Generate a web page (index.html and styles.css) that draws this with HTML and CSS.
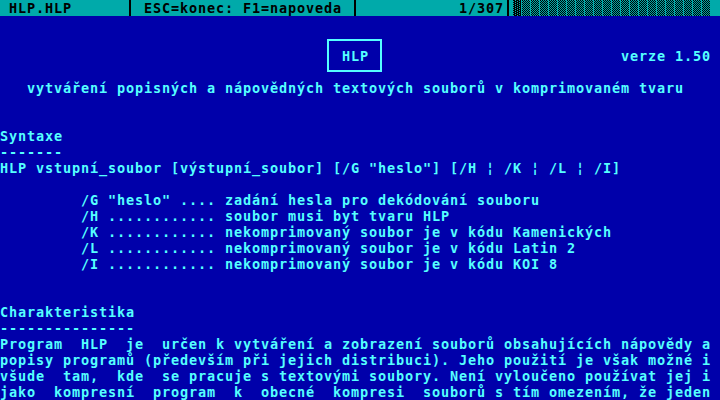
FILE: index.html
```html
<!DOCTYPE html>
<html lang="cs">
<head>
<meta charset="utf-8">
<title>HLP.HLP</title>
<link rel="stylesheet" href="styles.css">
</head>
<body>
<div class="screen">
  <div class="status">
    <span class="seg"> HLP.HLP      </span><span class="vb"></span><span class="seg"> ESC=konec: F1=napoveda </span><span class="vb"></span><span class="seg">           1/307</span><span class="vb"></span><svg class="scroll" width="198" height="16" viewBox="0 0 198 16" shape-rendering="crispEdges">
      <defs>
        <pattern id="med" width="9" height="2" patternUnits="userSpaceOnUse">
          <path d="M0 0h1v1H0zM2 0h1v1H2zM4 0h1v1H4zM6 0h1v1H6zM1 1h1v1H1zM3 1h1v1H3zM5 1h1v1H5zM7 1h1v1H7z" fill="#000"/>
        </pattern>
        <pattern id="dark" width="9" height="2" patternUnits="userSpaceOnUse">
          <rect x="0" y="0" width="8" height="2" fill="#000"/>
          <path d="M2 0h1v1H2zM6 0h1v1H6zM0 1h1v1H0zM4 1h1v1H4z" fill="#00aaaa"/>
        </pattern>
      </defs>
      <rect x="0" y="0" width="9" height="16" fill="url(#dark)"/>
      <rect x="9" y="0" width="189" height="16" fill="url(#med)"/>
    </svg><span class="seg"> </span>
  </div>
  <div class="main">
    <div class="ln"> </div>
    <div class="title">
      <div class="box">HLP</div>
      <div class="verze">verze 1.50</div>
    </div>
    <div class="ln">   vytváření popisných a nápovědných textových souborů v komprimovaném tvaru</div>
    <div class="ln"> </div>
    <div class="ln"> </div>
    <div class="ln">Syntaxe</div>
    <div class="ln">-------</div>
    <div class="ln">HLP vstupní_soubor [výstupní_soubor] [/G "heslo"] [/H ¦ /K ¦ /L ¦ /I]</div>
    <div class="ln"> </div>
    <div class="ln">         /G "heslo" .... zadání hesla pro dekódování souboru</div>
    <div class="ln">         /H ............ soubor musi byt tvaru HLP</div>
    <div class="ln">         /K ............ nekomprimovaný soubor je v kódu Kamenických</div>
    <div class="ln">         /L ............ nekomprimovaný soubor je v kódu Latin 2</div>
    <div class="ln">         /I ............ nekomprimovaný soubor je v kódu KOI 8</div>
    <div class="ln"> </div>
    <div class="ln"> </div>
    <div class="ln">Charakteristika</div>
    <div class="ln">---------------</div>
    <div class="ln">Program  HLP  je  určen k vytváření a zobrazení souborů obsahujících nápovědy a</div>
    <div class="ln">popisy programů (především při jejich distribuci). Jeho použití je však možné i</div>
    <div class="ln">všude  tam,  kde  se pracuje s textovými soubory. Není vyloučeno používat jej i</div>
    <div class="ln">jako  kompresní  program  k  obecné  kompresi  souborů s tím omezením, že jeden</div>
  </div>
</div>
</body>
</html>
```

FILE: styles.css
```css
html, body {
  margin: 0;
  padding: 0;
  background: #0000aa;
}

.screen {
  width: 720px;
  height: 400px;
  overflow: hidden;
  font-family: "DejaVu Sans Mono", "Liberation Mono", monospace;
  font-weight: bold;
  font-size: 13.5px;
  letter-spacing: 0.873px;
  line-height: 16px;
}

.status {
  display: flex;
  height: 16px;
  background: #00aaaa;
  color: #000;
}

.seg {
  white-space: pre;
  height: 16px;
}

.vb {
  display: block;
  flex: none;
  width: 9px;
  height: 16px;
  background: linear-gradient(#000, #000) 3px 0 / 2px 16px no-repeat;
}

.scroll {
  display: block;
  flex: none;
}

.main {
  background: #0000aa;
  color: #55ffff;
}

.ln {
  height: 16px;
  white-space: pre;
}

.title {
  display: flex;
  align-items: flex-start;
  height: 48px;
}

.box {
  flex: none;
  margin-left: 327px;
  margin-top: 7px;
  width: 38px;
  height: 22px;
  padding: 7px 0 0 13px;
  border: 2px solid #55ffff;
  white-space: pre;
}

.verze {
  flex: none;
  margin-left: 239px;
  margin-top: 16px;
  white-space: pre;
}
```
